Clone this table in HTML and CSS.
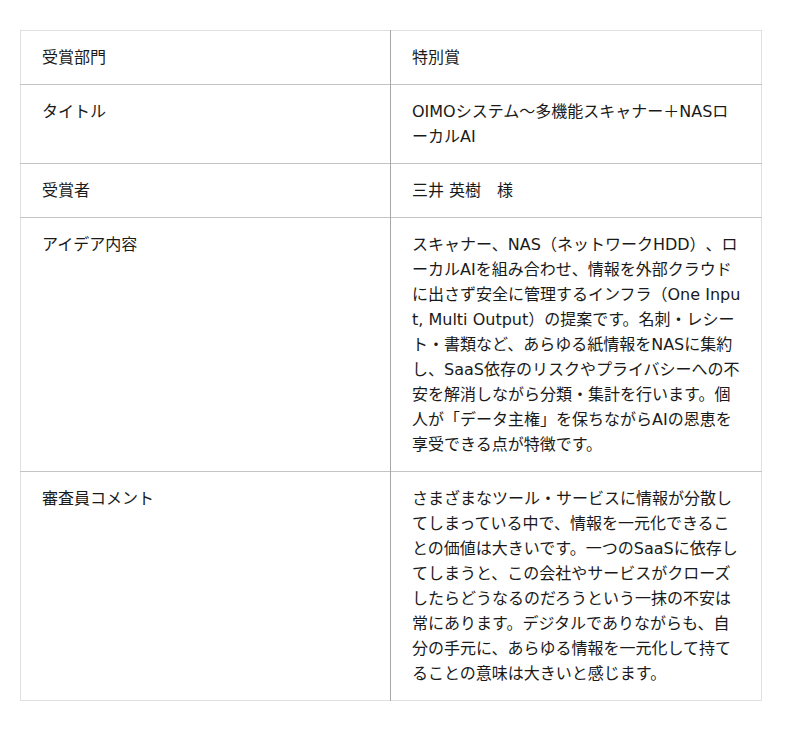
FILE: index.html
```html
<!DOCTYPE html>
<html lang="ja">
<head>
<meta charset="utf-8">
<link rel="stylesheet" href="styles.css">
</head>
<body>
<div class="page">
  <table class="award">
    <tr>
      <th class="label">受賞部門</th>
      <td class="value">特別賞</td>
    </tr>
    <tr>
      <th class="label">タイトル</th>
      <td class="value">OIMOシステム～多機能スキャナー＋NASローカルAI</td>
    </tr>
    <tr>
      <th class="label">受賞者</th>
      <td class="value">三井 英樹　様</td>
    </tr>
    <tr>
      <th class="label">アイデア内容</th>
      <td class="value">スキャナー、NAS（ネットワークHDD）、ローカルAIを組み合わせ、情報を外部クラウドに出さず安全に管理するインフラ（One Input, Multi Output）の提案です。名刺・レシート・書類など、あらゆる紙情報をNASに集約し、SaaS依存のリスクやプライバシーへの不安を解消しながら分類・集計を行います。個人が「データ主権」を保ちながらAIの恩恵を享受できる点が特徴です。</td>
    </tr>
    <tr>
      <th class="label">審査員コメント</th>
      <td class="value">さまざまなツール・サービスに情報が分散してしまっている中で、情報を一元化できることの価値は大きいです。一つのSaaSに依存してしまうと、この会社やサービスがクローズしたらどうなるのだろうという一抹の不安は常にあります。デジタルでありながらも、自分の手元に、あらゆる情報を一元化して持てることの意味は大きいと感じます。</td>
    </tr>
  </table>
</div>
</body>
</html>
```
FILE: styles.css
```css
html, body {
  margin: 0;
  padding: 0;
  background: #ffffff;
}
.page {
  padding: 30px 0 0 20px;
}
.award {
  width: 742px;
  border-collapse: collapse;
  table-layout: fixed;
  border: 1px solid #e0e0e0;
  font-family: "DejaVu Sans", "Noto Sans CJK JP", sans-serif;
  font-size: 16px;
  line-height: 25px;
  color: #1a1a1a;
  text-spacing-trim: space-all;
}
.award tr {
  border-top: 1px solid #c4c4c4;
}
.award tr:first-child {
  border-top: 1px solid #e0e0e0;
}
.label, .value {
  padding: 14px 20px 14px 21px;
  text-align: left;
  vertical-align: top;
  font-weight: normal;
}
.label {
  width: 328px;
  border-right: 1px solid #a8a8a8;
}
.value {
  word-break: break-all;
}
```
